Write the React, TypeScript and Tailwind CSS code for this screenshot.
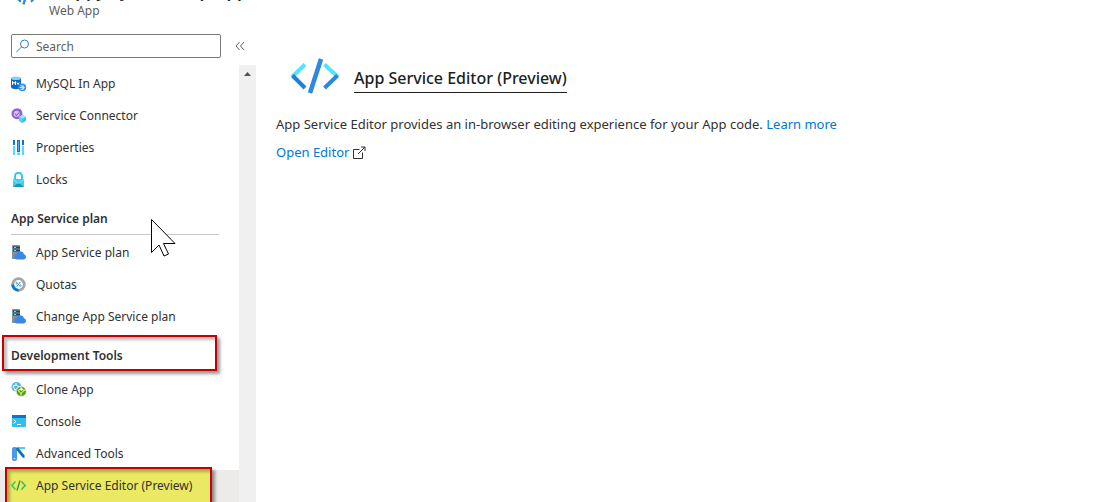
import React from "react";

type IconProps = { className?: string };

const iconBox = "relative size-4 shrink-0";

function CodeIcon({ className }: IconProps) {
  return (
    <svg viewBox="0 0 50 36" className={className} fill="none" strokeWidth="4" aria-hidden="true">
      <path d="M15 6.500 2 19" stroke="#50e6ff" />
      <path d="M2.500 17.500 15 30" stroke="#1f7fdb" />
      <path d="M34.500 6.500 48 19" stroke="#50e6ff" />
      <path d="M47.500 17.500 34.500 30" stroke="#2c86e3" />
      <path d="M31 1 20 35" stroke="#2f86e4" strokeWidth="4.500" />
    </svg>
  );
}

function MySqlIcon() {
  return (
    <svg viewBox="0 0 16 16" className={iconBox} aria-hidden="true">
      <path d="M0 2v9c0 1.300 2 2.200 5 2.200s5-.9 5-2.200V2z" fill="#0f6cbd" />
      <ellipse cx="5" cy="2.300" rx="5" ry="1.800" fill="#7fd3f5" />
      <path d="M1.500 9V5.500l1.500 2 1.500-2V9M6 6.500l1 2 1.200-2" stroke="#fff" fill="none" />
      <circle cx="11.300" cy="11.300" r="3.900" fill="#3b8ee0" />
      <path d="m9.500 9.500 4 2-4 2.500M8.500 11.500h4M12 9v5" stroke="#d8f2ff" fill="none" strokeWidth=".9" />
    </svg>
  );
}

function ConnectorIcon() {
  return (
    <svg viewBox="0 0 16 16" className={iconBox} aria-hidden="true">
      <circle cx="6" cy="5.700" r="5.500" fill="#9360dc" />
      <circle cx="5.700" cy="5.700" r="3" fill="#d9c3f7" />
      <path d="m4 5.500 1.500 2L8 4.500M8 3l1.500-1" stroke="#773adc" fill="none" />
      <path d="m11.500 7 3.500 1.800v4L11.500 15 8 12.800v-4z" fill="#32c5e9" />
      <path d="m11.500 7 3.500 1.800-3.500 2L8 8.800z" fill="#9cebff" />
      <path d="M8 8.800v4l3.500 2.200v-4.200z" fill="#50d7f2" />
    </svg>
  );
}

function PropertiesIcon() {
  return (
    <svg viewBox="0 0 16 16" className={iconBox} aria-hidden="true">
      <path d="M2 0h2v5H2zM6 0h3v12H6zM11 0h2v5h-2z" fill="#0f73c9" />
      <path d="M2 6h2v9H2zM11 6h2v9h-2zM6 12.500h3V15H6z" fill="#50dcf5" />
      <path d="M7 1h1v10H7z" fill="#5ea0ef" />
    </svg>
  );
}

function LockIcon() {
  return (
    <svg viewBox="0 0 16 16" className={iconBox} aria-hidden="true">
      <path d="M4 8V4.200a3.500 3.500 0 0 1 7 0V8" stroke="#32c5e9" strokeWidth="1.900" fill="none" />
      <rect x="2" y="7" width="11" height="8" rx=".7" fill="#3dd0ef" />
      <path d="m2 15 5.500-4.500L13 15z" fill="#1b93b8" />
      <path d="m2 7.500 5.500 4 5.500-4" stroke="#7deaff" fill="none" />
    </svg>
  );
}

function PlanIcon() {
  return (
    <svg viewBox="0 0 16 16" className={iconBox} aria-hidden="true">
      <rect x="1" y="0" width="8" height="14" rx=".6" fill="#8a8f96" />
      <path d="M2 1.500h7v2H2zM2 4.500h7v2H2z" fill="#114a78" />
      <path d="M3 2h2v1H3zM3 5h2v1H3z" fill="#50e6ff" />
      <path d="M6 14.500a3.100 3.100 0 0 1-.3-6.100 4 4 0 0 1 7.400.9 2.700 2.700 0 0 1-.2 5.200z" fill="#3b87e4" />
    </svg>
  );
}

function QuotaIcon() {
  return (
    <svg viewBox="0 0 16 16" className={iconBox} fill="none" aria-hidden="true">
      <circle cx="7.500" cy="7.500" r="5.800" stroke="#a5a5a5" strokeWidth="2.800" />
      <path d="M1.700 7.500a5.800 5.800 0 0 0 5.800 5.800" stroke="#0078d4" strokeWidth="2.800" />
      <path d="m5.800 9.500 3.500-4.500" stroke="#1688dd" />
      <circle cx="5.700" cy="6.200" r=".8" stroke="#1688dd" strokeWidth=".8" />
      <circle cx="9.300" cy="8.600" r=".8" stroke="#1688dd" strokeWidth=".8" />
    </svg>
  );
}

function CloneIcon() {
  return (
    <svg viewBox="0 0 16 16" className={iconBox} aria-hidden="true">
      <circle cx="5.500" cy="5" r="5" fill="#59b4d9" />
      <path d="m2 4 3-1 3 2-4 3zM5 3V1M8 5l2-1M4 8v2" stroke="#fff" fill="none" />
      <circle cx="10.300" cy="9.500" r="5" fill="#57a300" stroke="#fff" strokeWidth=".5" />
      <path d="m7 8.500 3.500-2L13 8.500l-3 3zM10 6.500V5M13 8.500l2-1M10 11.500v2" stroke="#fff" fill="none" />
      <circle cx="10.500" cy="7.500" r="1.200" fill="#fff" />
    </svg>
  );
}

function ConsoleIcon() {
  return (
    <svg viewBox="0 0 16 16" className={iconBox} aria-hidden="true">
      <rect x="1" y="1" width="14" height="12" rx=".7" fill="#32bfe9" />
      <path d="M1 1h14v3H1z" fill="#0f73c9" />
      <path d="m2.500 5.500 2.500 2-2.500 2M6 10.500h4" stroke="#fff" fill="none" />
    </svg>
  );
}

function ToolsIcon() {
  return (
    <svg viewBox="0 0 16 16" className={iconBox} aria-hidden="true">
      <rect x="1" y="1" width="5" height="14" rx="2" fill="#4e98e8" />
      <path d="M5 1h9v2H6z" fill="#50cdf5" />
      <path d="m5 2.500 2-1 6.500 8V12l-2-.5L6 4.500z" fill="#0f6cbd" />
      <circle cx="3.500" cy="12.500" r=".8" fill="#c3f1ff" />
    </svg>
  );
}

function SelectedCodeIcon() {
  return (
    <svg viewBox="0 0 16 16" className={iconBox} fill="none" strokeWidth="1.400" aria-hidden="true">
      <path d="M4.500 3.500.8 7.500l3.700 4" stroke="#38c560" />
      <path d="M10.500 3.500l3.700 4-3.700 4" stroke="#38b560" />
      <path d="M9 2.500 6 12.500" stroke="#31994a" />
    </svg>
  );
}

function OpenIcon() {
  return (
    <svg viewBox="0 0 13 13" className="size-[13px] shrink-0" fill="none" stroke="#323130" aria-hidden="true">
      <path d="M6.500 3.500h-6v9h9v-6M8 1h4v4M12 1 5 8" />
    </svg>
  );
}

type NavItemProps = { icon: React.ReactNode; children: React.ReactNode; selected?: boolean };

function NavItem({ icon, children, selected = false }: NavItemProps) {
  return (
    <li>
      <a href="#" aria-current={selected ? "page" : undefined} className={`relative flex h-8 items-center gap-[9px] pl-[11px] ${selected ? "bg-[#edebe9]" : ""}`}>
        {selected && (
          <span className="absolute -top-[3px] left-[5px] h-10 w-[207px] border-2 border-[#c40000] bg-[#ebe963] shadow-[3px_3px_3px_#0006,inset_3px_3px_3px_#0004]" />
        )}
        {icon}
        <span className="relative">{children}</span>
      </a>
    </li>
  );
}

export default function App() {
  return (
    <div className="relative flex h-screen overflow-hidden bg-white font-['Noto_Sans','Open_Sans',sans-serif] text-[13px] text-[#323130]">
      <aside className="flex w-64 shrink-0 flex-col text-xs">
        <header className="relative h-[34px] shrink-0 overflow-hidden pl-[49px] pt-[3px] leading-4 text-[#605e5c]">
          <CodeIcon className="absolute -top-3.5 left-[13px] h-[19px] w-[26px]" />
          <strong className="absolute -top-[21px] left-[49px] text-[17px] leading-6 font-semibold text-[#201f1e]">mappywytestsitespmpp</strong>
          Web App
        </header>
        <div className="flex h-6 shrink-0 items-center gap-[14px] pl-[11px]">
          <label className="flex h-6 w-[210px] items-center gap-1.5 rounded-xs border border-[#7a7876] px-1">
            <svg viewBox="0 0 14 14" className="size-3.5 shrink-0" fill="none" stroke="#2b7cd3" aria-hidden="true">
              <circle cx="8.500" cy="5" r="4" />
              <path d="m5.600 7.900-5 5" />
            </svg>
            <input type="search" aria-label="Search" placeholder="Search" className="w-full min-w-0 bg-transparent pt-px outline-none placeholder:text-[#605e5c]" />
          </label>
          <button aria-label="Collapse menu" className="shrink-0">
            <svg viewBox="0 0 10 10" className="size-[10px]" fill="none" stroke="#605e5c" aria-hidden="true">
              <path d="M4.500 1 1 5l3.500 4M9 1 5.500 5 9 9" />
            </svg>
          </button>
        </div>
        <div className="mt-[7px] flex min-h-0 flex-1">
          <nav className="min-w-0 flex-1 overflow-hidden pt-[3px]">
            <ul>
              <NavItem icon={<MySqlIcon />}>MySQL In App</NavItem>
              <NavItem icon={<ConnectorIcon />}>Service Connector</NavItem>
              <NavItem icon={<PropertiesIcon />}>Properties</NavItem>
              <NavItem icon={<LockIcon />}>Locks</NavItem>
            </ul>
            <h2 className="ml-[11px] mr-5 mt-[7px] flex h-8 items-center border-b border-[#c8c6c4] pt-px font-semibold">App Service plan</h2>
            <ul className="mt-0.5">
              <NavItem icon={<PlanIcon />}>App Service plan</NavItem>
              <NavItem icon={<QuotaIcon />}>Quotas</NavItem>
              <NavItem icon={<PlanIcon />}>Change App Service plan</NavItem>
            </ul>
            <h2 className="ml-0.5 mr-[22px] mt-0.5 flex h-9 items-center border-2 border-[#c40000] pl-[7px] pt-1.5 font-semibold shadow-[3px_3px_3px_#0006,inset_3px_3px_3px_#0004]">Development Tools</h2>
            <ul className="mt-[3px]">
              <NavItem icon={<CloneIcon />}>Clone App</NavItem>
              <NavItem icon={<ConsoleIcon />}>Console</NavItem>
              <NavItem icon={<ToolsIcon />}>Advanced Tools</NavItem>
              <NavItem icon={<SelectedCodeIcon />} selected>App Service Editor (Preview)</NavItem>
            </ul>
          </nav>
          <div className="flex w-[17px] shrink-0 justify-center bg-[#f0f0f0] pt-[7px]">
            <svg viewBox="0 0 7 4" className="h-1 w-[7px]" aria-hidden="true">
              <path d="M3.500 0 7 4H0z" fill="#505050" />
            </svg>
          </div>
        </div>
      </aside>
      <main className="min-w-0 flex-1 pl-5 pt-[58px]">
        <div className="flex items-center gap-[14px] pl-[14px]">
          <CodeIcon className="h-9 w-[50px] shrink-0" />
          <h1 className="border-b border-[#201f1e] pt-1 text-base leading-7 font-medium text-[#201f1e]">App Service Editor (Preview)</h1>
        </div>
        <p className="mt-5 leading-5">
          App Service Editor provides an in-browser editing experience for your App code.{" "}
          <a href="#" className="text-[#0078d4]">Learn more</a>
        </p>
        <a href="#" className="mt-2 inline-flex items-center gap-1 leading-5 text-[#0078d4]">
          Open Editor
          <OpenIcon />
        </a>
      </main>
      <svg viewBox="0 0 26 40" className="pointer-events-none absolute left-[151px] top-[218px] h-10 w-[26px]" aria-hidden="true">
        <path d="M.500 1.500v33l7.500-7.500 5 11 4.500-2-5-10.500h11.500z" fill="#fff" stroke="#000" />
      </svg>
    </div>
  );
}
